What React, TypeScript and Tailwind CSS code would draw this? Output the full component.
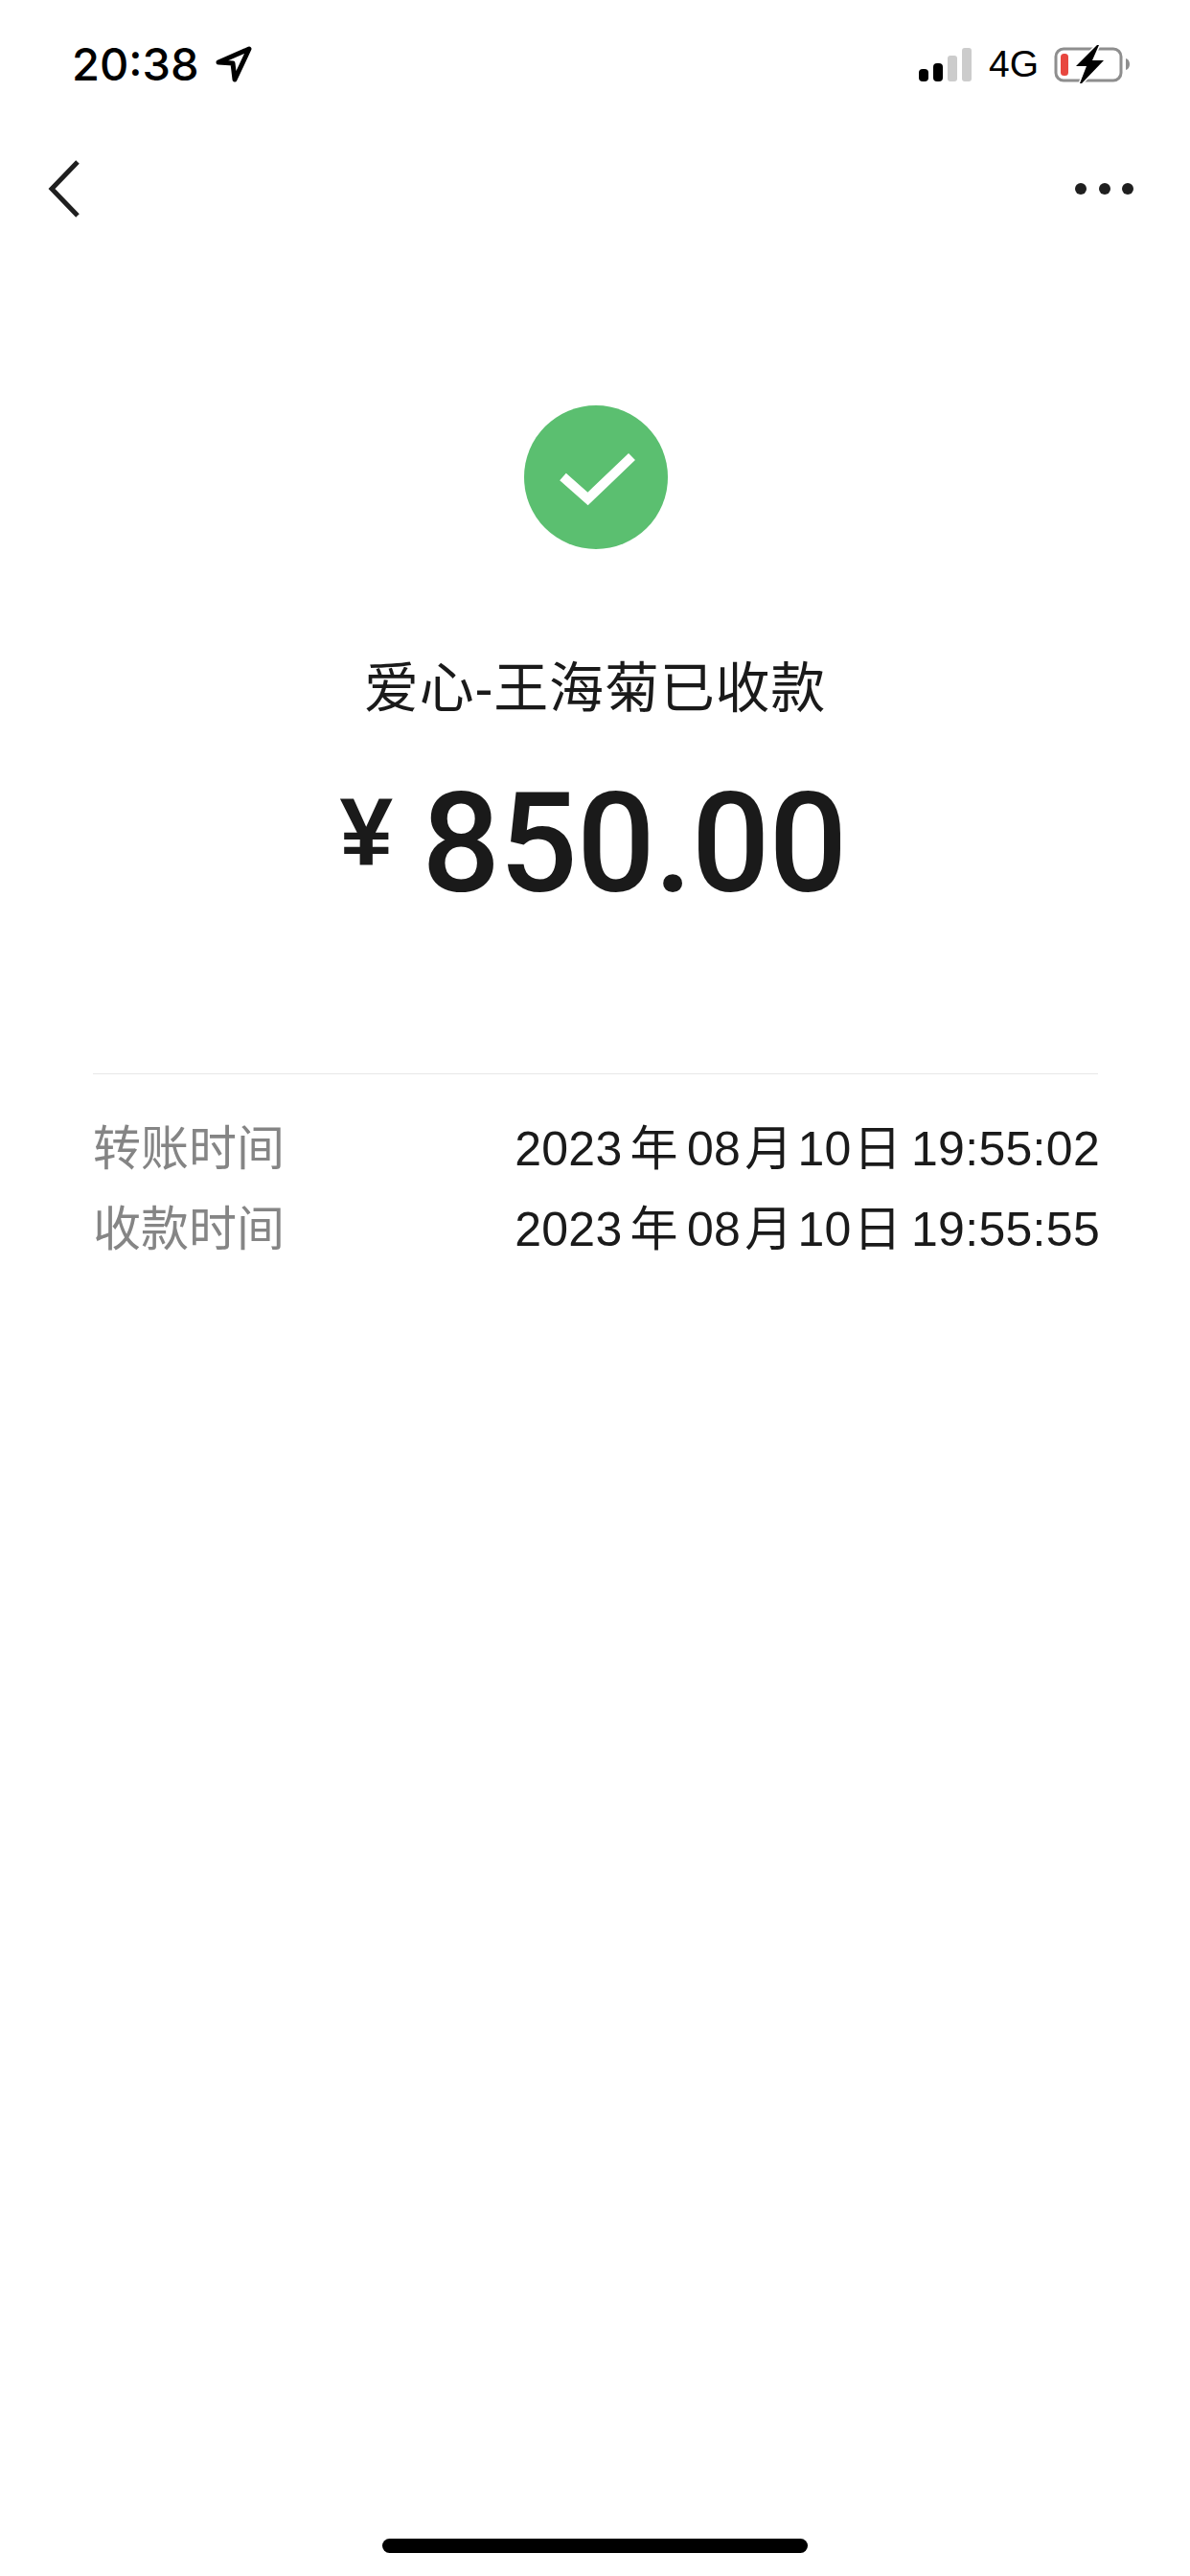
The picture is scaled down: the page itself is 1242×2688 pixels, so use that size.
const cjk = "font-['Liberation_Sans','Noto_Sans_CJK_SC',sans-serif]";

function SignalBars() {
  return (
    <div className="flex items-end gap-[5px] h-[35px]">
      <div className="w-[10px] h-[13px] rounded-[4px] bg-black" />
      <div className="w-[10px] h-[19px] rounded-[4px] bg-black" />
      <div className="w-[10px] h-[27px] rounded-[3px] bg-[#cccccc]" />
      <div className="w-[10px] h-[35px] rounded-[3px] bg-[#cccccc]" />
    </div>
  );
}

function Battery() {
  return (
    <svg width="82" height="42" viewBox="0 0 82 42" fill="none">
      <rect x="2" y="5" width="68" height="33" rx="8" stroke="#8e8e8e" strokeWidth="3" />
      <path d="M75 15c2.500.6 4 3 4 6s-1.500 5.400-4 6z" fill="#8e8e8e" />
      <rect x="7" y="10" width="8" height="23" rx="3.500" fill="#e8473f" />
      <path d="M23 23 45 1h2l-7 16h12L29 41h-2l7-18z" fill="#000" stroke="#fff" strokeWidth="3" paintOrder="stroke" />
    </svg>
  );
}

function DateValue({ time }: { time: string }) {
  return (
    <span className={`${cjk} -mr-[2px] text-[50px] leading-[60px] tracking-[0.3px] text-[#1a1a1a]`}>
      2023<span className="ml-[8px] mr-[9px]">年</span>08<span className="ml-[4px] mr-[5px]">月</span>10<span className="ml-[2px] mr-[10px]">日</span>{time}
    </span>
  );
}

function InfoRow({ label, time }: { label: string; time: string }) {
  return (
    <div className="flex items-center justify-between h-[84px]">
      <span className={`${cjk} text-[50px] leading-[60px] text-[#858585]`}>{label}</span>
      <DateValue time={time} />
    </div>
  );
}

export default function App() {
  return (
    <div className={`${cjk} flex flex-col min-h-[2688px] bg-white`}>
      {/* Status bar */}
      <div className="flex items-center justify-between h-[134px] pl-[75px] pr-[60px]">
        <div className="flex items-center gap-[17px]">
          <span className="font-['Inter',sans-serif] text-[47px] leading-[50px] font-medium text-black">20:38</span>
          <svg width="38" height="38" viewBox="0 0 38 38" fill="none">
            <path d="M3 17 35 3 20 35 18 18z" stroke="#000" strokeWidth="5" strokeLinejoin="round" />
          </svg>
        </div>
        <div className="flex items-center">
          <SignalBars />
          <span className="ml-[18px] mr-[16px] text-[39px] leading-[40px] text-black">4G</span>
          <Battery />
        </div>
      </div>

      {/* Nav */}
      <div className="flex items-center justify-between h-[126px] pl-[48px] pr-[59px]">
        <svg width="38" height="64" viewBox="0 0 38 64" fill="none">
          <path d="M33 4 6 32l27 28" stroke="#1f1f1f" strokeWidth="5" />
        </svg>
        <div className="flex items-center gap-[12.500px]">
          <div className="w-[12px] h-[12px] rounded-full bg-[#1f1f1f]" />
          <div className="w-[12px] h-[12px] rounded-full bg-[#1f1f1f]" />
          <div className="w-[12px] h-[12px] rounded-full bg-[#1f1f1f]" />
        </div>
      </div>

      {/* Result */}
      <div className="flex flex-col items-center">
        <div className="flex items-center justify-center w-[150px] h-[150px] mt-[163px] ml-[2px] rounded-full bg-[#5bbf70]">
          <svg width="84" height="64" viewBox="0 0 84 64" fill="none">
            <path d="M7.500 31.500 33.500 54.500 79.500 10.500" stroke="#fff" strokeWidth="10" />
          </svg>
        </div>
        <div className="mt-[110px] text-[57px] leading-[70px] tracking-[0.8px] text-[#1a1a1a]">爱心-王海菊已收款</div>
        <div className="flex items-center gap-[30px] mt-[53px] pr-[4px] h-[150px]">
          <span className="mb-[26px] font-bold text-[100px] leading-[100px] text-[#1a1a1a]">¥</span>
          <span className="font-['Roboto',sans-serif] font-medium text-[144px] leading-[150px] text-[#1a1a1a] tracking-[-1px]">850.00</span>
        </div>
      </div>

      {/* Times */}
      <div className="ml-[97px] mr-[96px] mt-[164px] border-t border-[#e8e8e8] pt-[36px]">
        <InfoRow label="转账时间" time="19:55:02" />
        <InfoRow label="收款时间" time="19:55:55" />
      </div>

      {/* Home indicator */}
      <div className="mt-auto mb-[24px] mx-auto w-[444px] h-[15px] rounded-full bg-black" />
    </div>
  );
}
